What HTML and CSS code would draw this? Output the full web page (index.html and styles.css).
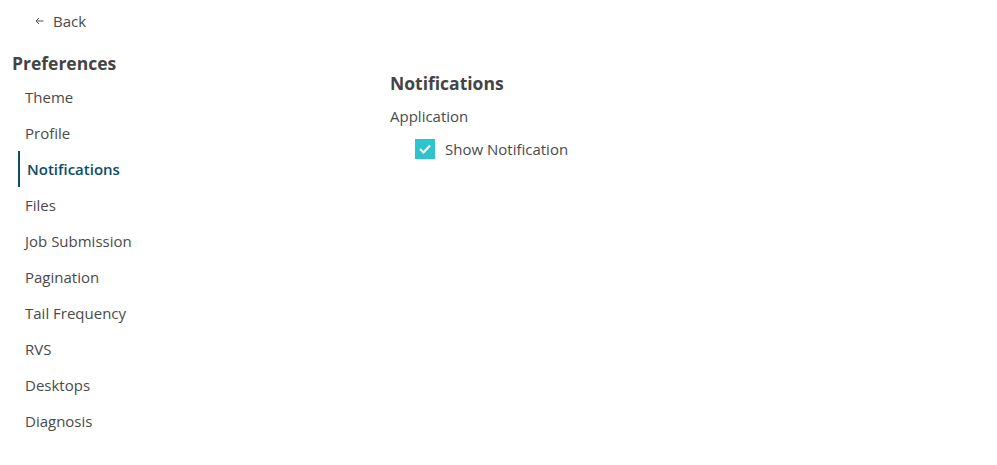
FILE: index.html
```html
<!DOCTYPE html>
<html lang="en">

<head>
    <meta charset="UTF-8">
    <title>Preferences</title>
    <link rel="stylesheet" href="styles.css">
</head>

<body>
    <div id="page">
        <a class="back" href="#">
            <svg width="9" height="8" viewBox="0 0 9 8" fill="none" stroke="#555" stroke-width="1">
                <path d="M8.5 4H1M4 1L1 4L4 7" />
            </svg>
            <span>Back</span>
        </a>
        <div id="layout">
            <nav class="sidebar">
                <h2>Preferences</h2>
                <ul class="menu">
                    <li>Theme</li>
                    <li>Profile</li>
                    <li class="active">Notifications</li>
                    <li>Files</li>
                    <li>Job Submission</li>
                    <li>Pagination</li>
                    <li>Tail Frequency</li>
                    <li>RVS</li>
                    <li>Desktops</li>
                    <li>Diagnosis</li>
                </ul>
            </nav>
            <main class="content">
                <h3>Notifications</h3>
                <div class="group-label">Application</div>
                <label class="check">
                    <span class="box">
                        <svg width="12" height="10" viewBox="0 0 12 10" fill="none" stroke="#fff" stroke-width="2">
                            <path d="M1 5L4.5 8.5L11 1.5" />
                        </svg>
                    </span>
                    <span>Show Notification</span>
                </label>
            </main>
        </div>
    </div>
</body>

</html>
```

FILE: styles.css
```css
body {
    margin: 0;
    font-family: "Open Sans", sans-serif;
    font-size: 15px;
    color: #4a4a4a;
    background: #ffffff;
}

#page {
    padding: 11px 0 0 12px;
}

.back {
    display: flex;
    align-items: center;
    gap: 9px;
    height: 20px;
    margin-left: 23px;
    color: #4a4a4a;
    text-decoration: none;
    font-size: 15px;
    line-height: 20px;
}

#layout {
    display: grid;
    grid-template-columns: 378px 1fr;
    margin-top: 20px;
}

.sidebar h2 {
    margin: 0 0 4px 0;
    font-size: 17.5px;
    line-height: 24px;
    font-weight: 700;
    color: #444;
}

.menu {
    list-style: none;
    margin: 0;
    padding: 0;
}

.menu li {
    height: 36px;
    line-height: 36px;
    margin-left: 6px;
    padding-left: 7px;
    font-size: 15px;
    color: #4a4a4a;
}

.menu li.active {
    border-left: 2px solid #0b4d6b;
    color: #0b4d6b;
    font-weight: 600;
}

.content {
    padding-top: 20px;
}

.content h3 {
    margin: 0;
    font-size: 17.5px;
    line-height: 24px;
    font-weight: 700;
    color: #444;
}

.group-label {
    margin-top: 11px;
    line-height: 20px;
}

.check {
    display: flex;
    align-items: center;
    gap: 10px;
    margin: 13px 0 0 25px;
    line-height: 20px;
}

.check .box {
    display: flex;
    align-items: center;
    justify-content: center;
    width: 20px;
    height: 20px;
    background: #2ec4cf;
}
```
